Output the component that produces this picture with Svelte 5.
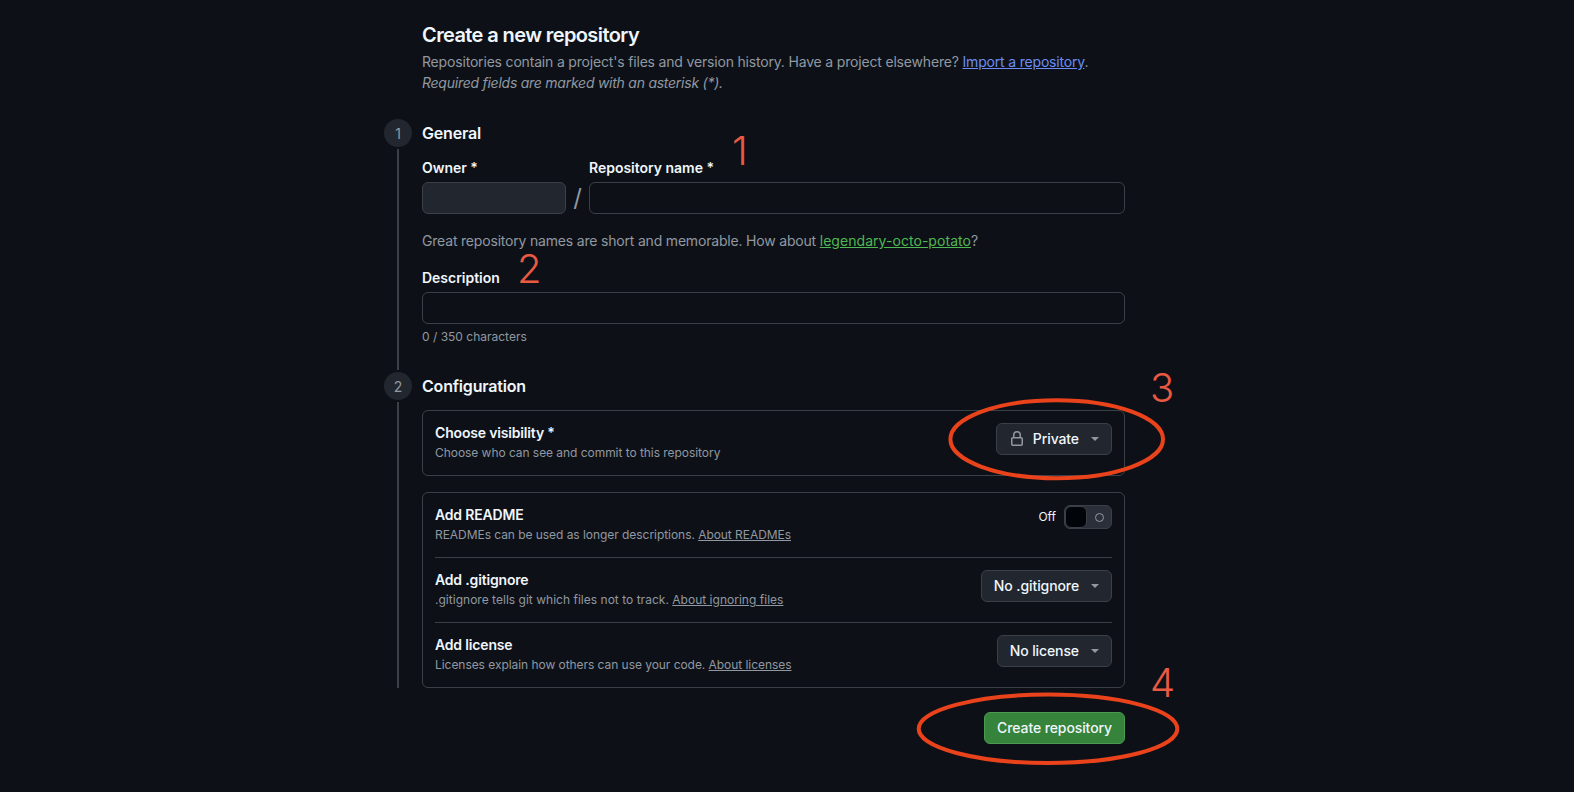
<script>
  const rows = [
    { title: 'Add .gitignore', desc: '.gitignore tells git which files not to track. ', link: 'About ignoring files', btn: 'No .gitignore', wide: true },
    { title: 'Add license', desc: 'Licenses explain how others can use your code. ', link: 'About licenses', btn: 'No license', wide: false }
  ];
</script>

<div class="page">
  <header class="intro">
    <h1>Create a new repository</h1>
    <p>Repositories contain a project's files and version history. Have a project elsewhere? <a class="blue" href="#import">Import a repository</a>.</p>
    <p class="req"><em>Required fields are marked with an asterisk (*).</em></p>
  </header>

  <section class="step first">
    <div class="rail"><span class="num">1</span><span class="line"></span></div>
    <div class="body">
      <h2>General</h2>
      <div class="names">
        <div class="owner">
          <span class="label">Owner *</span>
          <div class="input disabled"></div>
        </div>
        <span class="slash">/</span>
        <div class="repo">
          <span class="label">Repository name *</span>
          <div class="input"></div>
        </div>
      </div>
      <p class="hint">Great repository names are short and memorable. How about <a class="green" href="#name">legendary-octo-potato</a>?</p>
      <span class="label desc-label">Description</span>
      <div class="input"></div>
      <p class="count">0 / 350 characters</p>
    </div>
  </section>

  <section class="step">
    <div class="rail"><span class="num">2</span><span class="line"></span></div>
    <div class="body">
      <h2>Configuration</h2>
      <div class="card single">
        <div class="row">
          <div class="text">
            <strong>Choose visibility *</strong>
            <small>Choose who can see and commit to this repository</small>
          </div>
          <button class="btn">
            <svg class="lock" width="16" height="16" viewBox="0 0 16 16" fill="currentColor"><path d="M4 4a4 4 0 0 1 8 0v2h.25c.966 0 1.75.784 1.75 1.75v5.5A1.75 1.75 0 0 1 12.25 15h-8.5A1.75 1.75 0 0 1 2 13.25v-5.5C2 6.784 2.784 6 3.75 6H4Zm6.5 2V4a2.5 2.5 0 1 0-5 0v2ZM3.750 7.500a.25.25 0 0 0-.25.25v5.5c0 .138.112.25.25.25h8.5a.25.25 0 0 0 .25-.25v-5.5a.25.25 0 0 0-.25-.25Z"/></svg>
            <span>Private</span>
            <i class="caret"></i>
          </button>
        </div>
      </div>
      <div class="card">
        <div class="row">
          <div class="text">
            <strong>Add README</strong>
            <small>READMEs can be used as longer descriptions. <a href="#readme">About READMEs</a></small>
          </div>
          <div class="toggle-wrap">
            <span class="off">Off</span>
            <span class="toggle"><span class="knob"></span><span class="ring"></span></span>
          </div>
        </div>
        {#each rows as r}
          <div class="row sep">
            <div class="text">
              <strong>{r.title}</strong>
              <small class:wide={r.wide}>{r.desc}<a href="#about">{r.link}</a></small>
            </div>
            <button class="btn"><span>{r.btn}</span><i class="caret"></i></button>
          </div>
        {/each}
      </div>
    </div>
  </section>

  <div class="actions"><button class="create">Create repository</button></div>

  <span class="mark m1">1</span>
  <span class="mark m2">2</span>
  <span class="mark m3">3</span>
  <span class="mark m4">4</span>
  <svg class="rings" width="1574" height="792" viewBox="0 0 1574 792" fill="none" stroke="#ea431c" stroke-width="4">
    <ellipse cx="1056.700" cy="439.200" rx="106.300" ry="39"/>
    <ellipse cx="1048" cy="728.800" rx="129.300" ry="34.200"/>
  </svg>
</div>

<style>
  :global(body) {
    margin: 0;
    background: #0d1117;
    font-family: Inter, "Liberation Sans", sans-serif;
    color: #f0f6fc;
  }
  .page {
    position: relative;
    height: 792px;
    box-sizing: border-box;
    overflow: hidden;
    padding: 22px 0 0 384px;
  }
  .intro { padding-left: 38px; }
  h1 { margin: 0 0 3px; font-size: 20px; line-height: 26px; font-weight: 600; letter-spacing: -0.6px; }
  .intro p { margin: 0; font-size: 14px; line-height: 21px; color: #9198a1; letter-spacing: -0.18px; }
  .intro .req { letter-spacing: -0.25px; }
  .blue { color: #6c8df5; }
  .step { display: flex; width: 741px; gap: 10px; }
  .first { margin-top: 26px; height: 253px; }
  .rail { width: 28px; flex: none; display: flex; flex-direction: column; align-items: center; }
  .num {
    width: 28px; height: 28px; border-radius: 50%; background: #22272f; color: #9198a1;
    font-size: 14px; display: flex; align-items: center; justify-content: center; flex: none;
  }
  .line { flex: 1; width: 2px; background: #3b3f47; margin: 2px 0 2px; }
  .step:not(.first) .line { margin-bottom: 0; }
  .body { width: 703px; }
  h2 { margin: 0; font-size: 16px; line-height: 28px; font-weight: 600; letter-spacing: -0.2px; }
  .names { display: flex; align-items: flex-end; margin-top: 11px; }
  .owner { width: 144px; flex: none; }
  .repo { flex: 1; }
  .slash { width: 23px; text-align: center; font-size: 24px; line-height: 32px; color: #9198a1; font-weight: 400; }
  .label { display: block; font-size: 14px; line-height: 20px; font-weight: 600; margin-bottom: 4px; letter-spacing: -0.02px; }
  .input { height: 32px; box-sizing: border-box; border: 1px solid #3b3f47; border-radius: 6px; }
  .disabled { background: #22272f; }
  .hint { margin: 16px 0 0; font-size: 14px; line-height: 21px; color: #9198a1; letter-spacing: -0.19px; }
  .green { color: #50b852; letter-spacing: 0.05px; }
  .desc-label { margin-top: 17px; }
  .count { margin: 6px 0 0; font-size: 12px; line-height: 13px; color: #9198a1; }
  .card { border: 1px solid #3b3f47; border-radius: 6px; padding: 0 12px; margin-top: 10px; }
  .card + .card { margin-top: 16px; }
  .row { display: flex; align-items: flex-start; justify-content: space-between; height: 64px; box-sizing: border-box; padding-top: 12px; }
  .sep { border-top: 1px solid #3b3f47; height: 65px; }
  .text { display: flex; flex-direction: column; }
  strong { font-size: 14px; line-height: 20px; font-weight: 600; letter-spacing: -0.17px; }
  small { font-size: 12px; line-height: 18px; color: #9198a1; margin-top: 1px; letter-spacing: -0.05px; }
  small.wide { letter-spacing: 0.02px; }
  small a { color: #9198a1; }
  .btn {
    display: flex; align-items: center; height: 32px; padding: 0 12px; box-sizing: border-box;
    background: #22272f; border: 1px solid #3b3f47; border-radius: 6px; color: #f0f6fc;
    font: 500 14px Inter, "Liberation Sans", sans-serif; letter-spacing: -0.1px;
  }
  .btn span { margin-bottom: 2px; }
  .lock { color: #9198a1; margin-right: 8px; }
  .caret {
    margin-left: 12px; width: 0; height: 0;
    border: 4px solid transparent; border-top-color: #9198a1; border-bottom: 0;
  }
  .toggle-wrap { display: flex; align-items: center; gap: 8px; font-size: 12px; }
  .off { margin-bottom: 2px; }
  .toggle {
    width: 48px; height: 24px; box-sizing: border-box; display: flex; align-items: center; justify-content: space-between;
    background: #2b2f39; border: 1px solid #3b3f47; border-radius: 6px; padding-right: 7px;
  }
  .knob { width: 22px; height: 22px; background: #010409; border: 1px solid #3b3f47; box-sizing: border-box; border-radius: 6px; }
  .ring { width: 9px; height: 9px; box-sizing: border-box; border: 1px solid #9198a1; border-radius: 50%; }
  .actions { width: 741px; display: flex; justify-content: flex-end; margin-top: 24px; }
  .create {
    height: 32px; padding: 0 12px 2px; box-sizing: border-box; background: #36843c; color: #f0f6fc;
    border: 1px solid #4a9a50; border-radius: 6px; font: 500 14px Inter, "Liberation Sans", sans-serif; letter-spacing: -0.1px;
  }
  .mark { position: absolute; color: #ea5a43; font-size: 40px; line-height: 30px; font-weight: 300; }
  .m1 { left: 732px; top: 136px; }
  .m2 { left: 517px; top: 254px; }
  .m3 { left: 1150px; top: 373px; }
  .m4 { left: 1150px; top: 668px; }
  .rings { position: absolute; left: 0; top: 0; pointer-events: none; }
</style>
